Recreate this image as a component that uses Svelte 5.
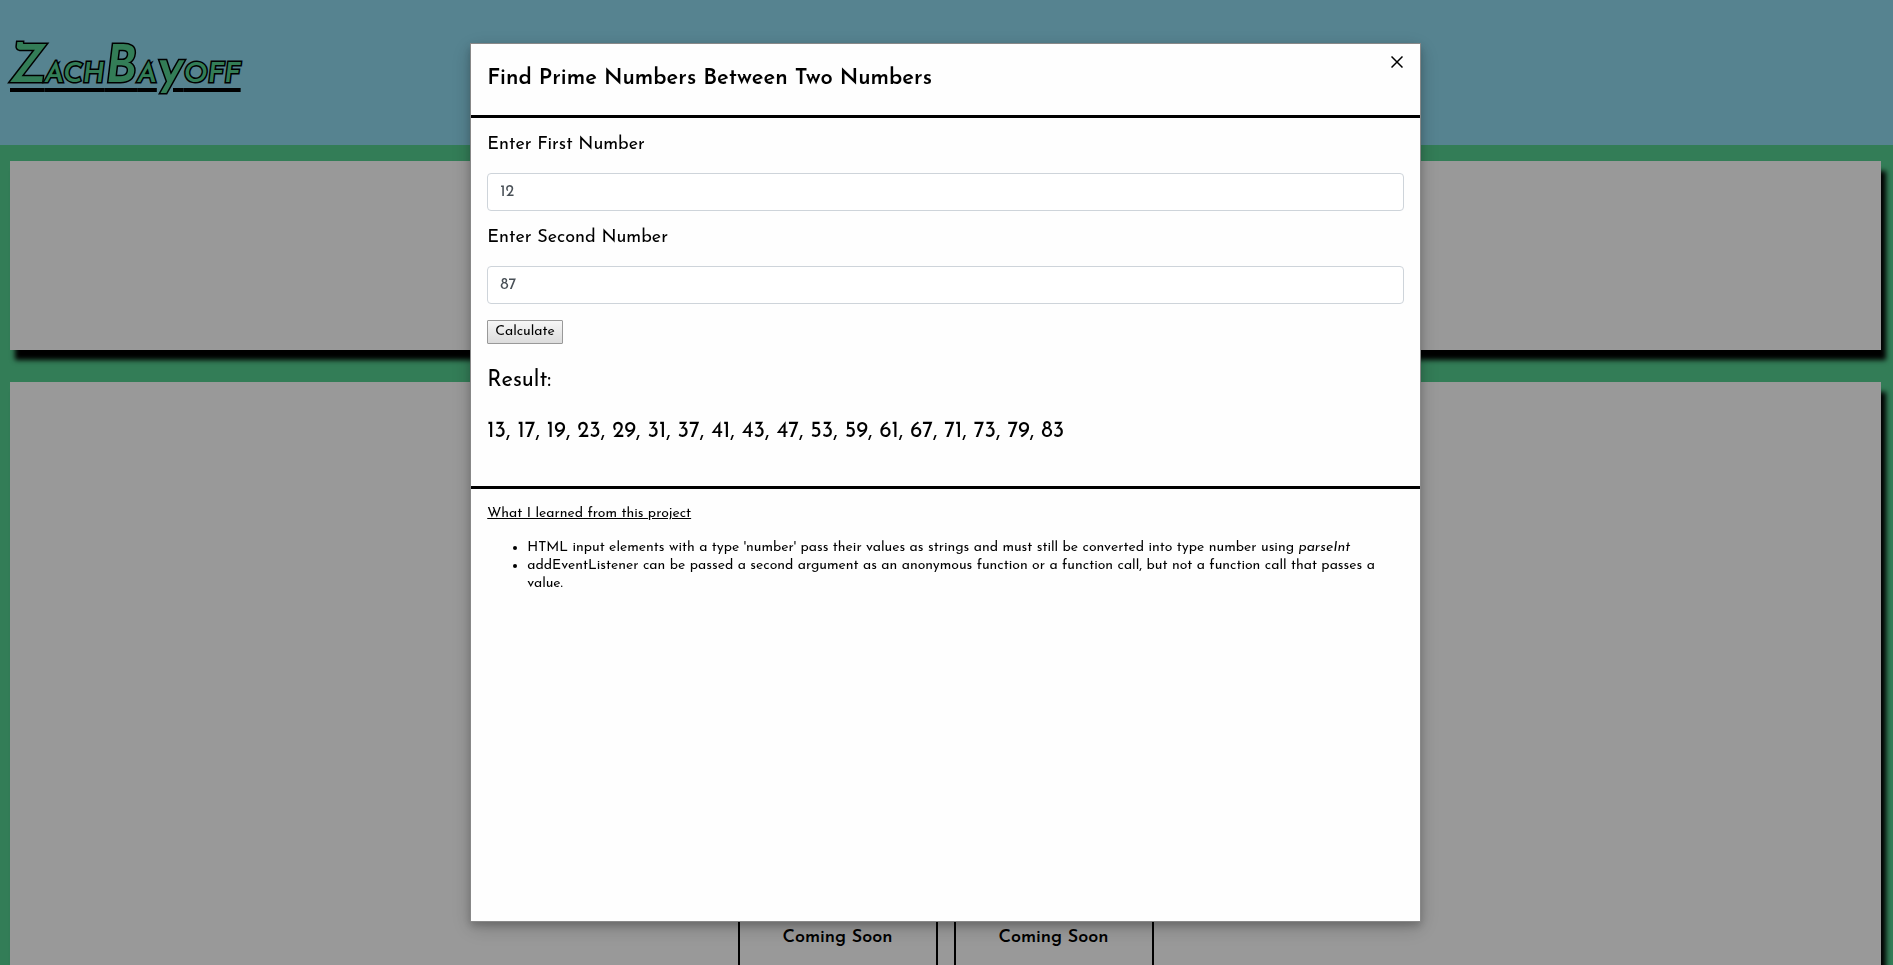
<script>
  let first = $state(12);
  let second = $state(87);
  let open = $state(true);

  function isPrime(n) {
    if (n < 2) return false;
    for (let d = 2; d * d <= n; d++) if (n % d === 0) return false;
    return true;
  }

  function primesBetween(a, b) {
    const found = [];
    for (let n = Math.min(a, b); n <= Math.max(a, b); n++) if (isPrime(n)) found.push(n);
    return found.join(', ');
  }

  let result = $state(primesBetween(12, 87));

  function calculate(event) {
    event.preventDefault();
    result = primesBetween(first, second);
  }
</script>

<div class="page">
  <header class="banner">
    <a class="logo" href="#top"><span class="tall">Z</span>ach<span class="tall">B</span>a<span class="tall plain">y</span>off</a>
  </header>
  <main>
    <section class="panel intro"></section>
    <section class="panel projects">
      <article class="card"><h3>Coming Soon</h3></article>
      <article class="card"><h3>Coming Soon</h3></article>
    </section>
  </main>
</div>

{#if open}
  <div class="overlay">
    <div class="modal" role="dialog" aria-labelledby="modal-title">
      <header class="modal-head">
        <h2 id="modal-title">Find Prime Numbers Between Two Numbers</h2>
        <button class="close" type="button" aria-label="Close" onclick={() => (open = false)}>
          <svg viewBox="0 0 12 12" width="12" height="12" aria-hidden="true">
            <path d="M0.5 0.5 L11.5 11.5 M11.5 0.5 L0.5 11.5" />
          </svg>
        </button>
      </header>
      <form class="modal-body" onsubmit={calculate}>
        <label for="first">Enter First Number</label>
        <input id="first" type="number" bind:value={first} />
        <label for="second">Enter Second Number</label>
        <input id="second" type="number" bind:value={second} />
        <button class="calculate" type="submit">Calculate</button>
        <p class="output">Result:</p>
        <p class="output">{result}</p>
      </form>
      <footer class="notes">
        <p><u>What I learned from this project</u></p>
        <ul>
          <li>
            HTML input elements with a type 'number' pass their values as strings and must still be
            converted into type number using <em>parseInt</em>
          </li>
          <li>
            addEventListener can be passed a second argument as an anonymous function or a function
            call, but not a function call that passes a value.
          </li>
        </ul>
      </footer>
    </div>
  </div>
{/if}

<style>
  :global(body) {
    margin: 0;
    overflow: hidden;
  }
  .page,
  .overlay {
    box-sizing: border-box;
    font-family: 'Josefin Sans', Lato, sans-serif;
    color: #000;
  }
  .page {
    height: 100vh;
    overflow: hidden;
    background: #55d091;
  }
  .banner {
    box-sizing: border-box;
    height: 145px;
    padding: 37px 10px;
    background: #8fdaf0;
  }
  .logo {
    font-size: 40px;
    line-height: 64px;
    font-weight: 600;
    font-style: italic;
    font-variant: small-caps;
    white-space: nowrap;
    color: #55d091;
    -webkit-text-stroke: 3px #000;
    paint-order: stroke fill;
    text-decoration: underline;
    text-decoration-color: #000;
    text-decoration-thickness: 4px;
    text-underline-offset: 6px;
  }
  .tall {
    font-size: 52px;
  }
  .plain {
    font-variant: normal;
  }
  main {
    display: flex;
    flex-direction: column;
    gap: 32px;
    padding: 16px 12px 0 10px;
  }
  .panel {
    background: #fff;
    box-shadow: 5px 10px 5px #000;
  }
  .intro {
    height: 189px;
  }
  .projects {
    display: flex;
    justify-content: center;
    gap: 16px;
    padding-top: 340px;
    height: 600px;
  }
  .card {
    box-sizing: border-box;
    width: 200px;
    padding-top: 202px;
    border: 2px solid #000;
    text-align: center;
  }
  .card h3 {
    margin: 0;
    font-size: 18px;
    line-height: 24px;
    font-weight: 600;
  }
  .overlay {
    position: fixed;
    inset: 0;
    display: flex;
    align-items: center;
    justify-content: center;
    padding-right: 2px;
    background: rgba(0, 0, 0, 0.4);
  }
  .modal {
    box-sizing: border-box;
    width: calc(50% + 5px);
    min-height: 91vh;
    border: 1px solid #888;
    background: #fefefe;
    box-shadow:
      0 4px 8px rgba(0, 0, 0, 0.2),
      0 6px 20px rgba(0, 0, 0, 0.19);
  }
  .modal-head {
    display: flex;
    justify-content: space-between;
    align-items: flex-start;
    padding: 16px;
    border-bottom: 3px solid #000;
  }
  h2 {
    margin: 0;
    padding: 3px 0 4px;
    font-size: 22px;
    line-height: 32px;
    font-weight: 600;
  }
  .close {
    display: flex;
    margin: -8px -7px 0 0;
    padding: 4px 8px;
    border: 0;
    background: none;
    cursor: pointer;
  }
  .close path {
    fill: none;
    stroke: #000;
    stroke-width: 1.5;
  }
  .modal-body {
    display: flex;
    flex-direction: column;
    align-items: flex-start;
    gap: 16px;
    padding: 16px 16px 40px;
    border-bottom: 3px solid #000;
  }
  label {
    font-size: 18px;
    line-height: 23px;
  }
  input {
    box-sizing: border-box;
    width: 100%;
    height: 38px;
    padding: 6px 12px;
    border: 1px solid #ced4da;
    border-radius: 4px;
    background: #fff;
    color: #495057;
    font: inherit;
    font-size: 16px;
    appearance: textfield;
  }
  .calculate {
    box-sizing: border-box;
    height: 24px;
    padding: 0 7px;
    border: 1px solid #999;
    border-radius: 1px;
    background: linear-gradient(#f6f6f6, #dcdcdc);
    color: #000;
    font: inherit;
    font-size: 14px;
    line-height: 20px;
  }
  .output {
    margin: 7px 0 0;
    font-size: 22px;
    line-height: 28px;
  }
  .notes {
    padding: 16px;
    font-size: 14px;
    line-height: 18px;
  }
  .notes p,
  .notes ul {
    margin: 0 0 16px;
  }
  .notes ul {
    padding-left: 40px;
  }
</style>
